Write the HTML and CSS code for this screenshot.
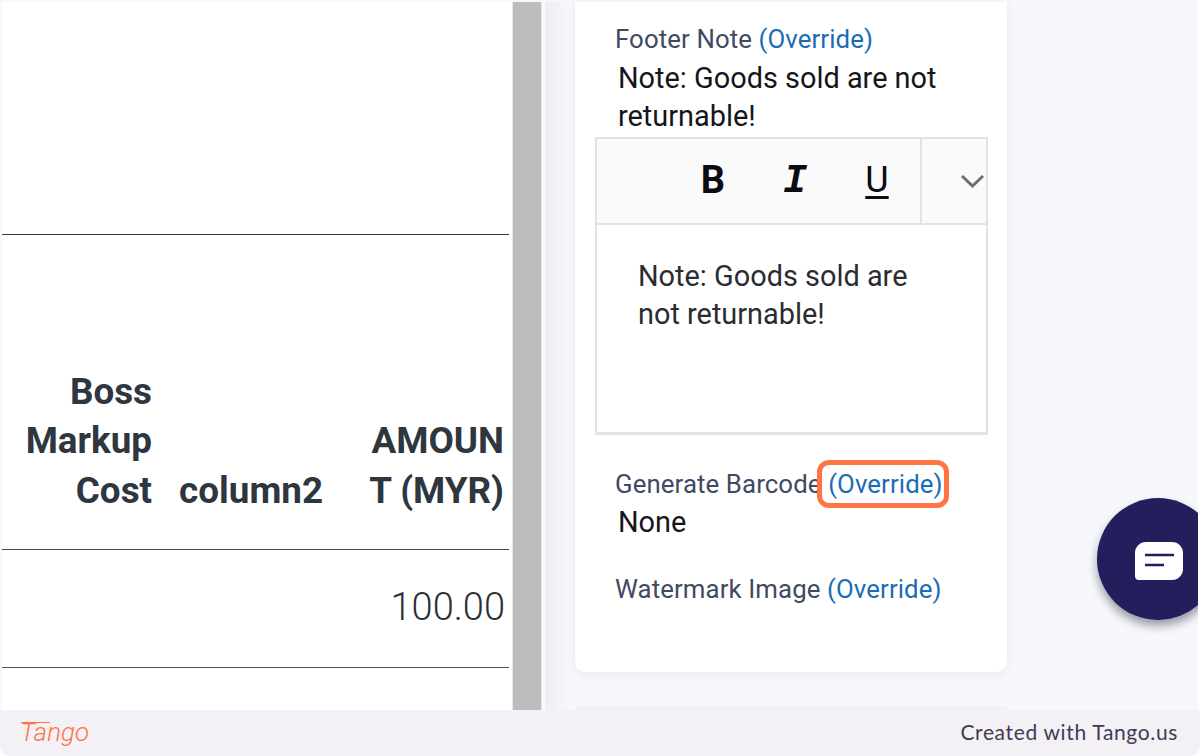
FILE: index.html
```html
<!DOCTYPE html>
<html lang="en">
<head>
    <meta charset="UTF-8">
    <meta name="viewport" content="width=device-width, initial-scale=1.0">
    <title>Footer Note Override</title>
    <link rel="stylesheet" href="styles.css">
</head>
<body>
    <div class="frame">
        <div class="page">
            <div class="preview">
                <div class="table-head">
                    <div class="th th-boss">Boss Markup Cost</div>
                    <div class="th th-col2">column2</div>
                    <div class="th th-amount">AMOUN<br>T (MYR)</div>
                </div>
                <div class="table-row">100.00</div>
            </div>
            <div class="scrollbar"></div>
            <div class="side">
                <div class="card">
                    <div class="label">Footer Note <a class="override">(Override)</a></div>
                    <div class="value value-note">Note: Goods sold are not returnable!</div>
                    <div class="editor">
                        <div class="toolbar">
                            <div class="tools">
                                <span class="tool tool-b">B</span>
                                <span class="tool tool-i">I</span>
                                <span class="tool tool-u">U</span>
                            </div>
                            <div class="more">
                                <svg width="25" height="14" viewBox="0 0 25 14"><path d="M2 2l10.500 10L23 2" fill="none" stroke="#6b6f76" stroke-width="3"/></svg>
                            </div>
                        </div>
                        <div class="editor-body">Note: Goods sold are not returnable!</div>
                    </div>
                    <div class="label label-barcode">Generate Barcode <a class="override override-marked">(Override)</a></div>
                    <div class="value">None</div>
                    <div class="label label-watermark">Watermark Image <a class="override">(Override)</a></div>
                </div>
                <div class="card-next"></div>
            </div>
        </div>
        <div class="chat-btn">
            <svg width="48" height="38" viewBox="0 0 48 38">
                <path d="M11 0h26a11 11 0 0 1 11 11v16a11 11 0 0 1-11 11H4a4 4 0 0 1-4-4V11A11 11 0 0 1 11 0z" fill="#fff"/>
                <path d="M10 13h29M10 23h19" stroke="#221f5c" stroke-width="2.500" fill="none"/>
            </svg>
        </div>
    </div>
    <div class="footer">
        <span class="logo">Tango</span>
        <span class="credit">Created with Tango.us</span>
    </div>
</body>
</html>
```

FILE: styles.css
```css
* {
    box-sizing: border-box;
}
html, body {
    height: 100%;
}
body {
    margin: 0;
    background: #fff;
    font-family: 'Roboto', sans-serif;
    overflow: hidden;
}
.frame {
    position: relative;
    height: 710px;
    margin-right: 2px;
    padding: 2px 0 0 2px;
    background: #f7f8fc;
    overflow: hidden;
}
.page {
    height: 100%;
    display: flex;
}
.preview {
    width: 510px;
    padding: 232px 3px 0 0;
    background: #fff;
}
.table-head {
    display: flex;
    align-items: flex-end;
    justify-content: flex-end;
    height: 316px;
    padding-bottom: 34px;
    border-top: 1px solid #3c3c3c;
    border-bottom: 1px solid #4a4a4a;
    font-size: 36.8px;
    font-weight: 700;
    line-height: 49.5px;
    color: #2e3640;
    text-align: right;
}
.th-boss {
    width: 130px;
    margin-right: 25px;
}
.th-col2 {
    width: 146px;
    margin-right: 43px;
}
.th-amount {
    width: 138px;
    margin-right: 5px;
    white-space: nowrap;
}
.table-row {
    height: 118px;
    padding: 35px 4px 0 0;
    border-bottom: 1px solid #555;
    text-align: right;
    font-size: 38px;
    font-weight: 300;
    line-height: 44px;
    color: #2b2f36;
}
.scrollbar {
    width: 30px;
    background: #bdbdbd;
    border-left: 1px solid #e6e6e6;
    border-right: 1px solid #e6e6e6;
}
.side {
    width: 465px;
    padding-left: 33px;
    background: linear-gradient(90deg, #fafafc 0, #fafafc 3px, #eceef4 4px, #f7f8fc 28px);
}
.card {
    height: 670px;
    padding: 18px 20px 0;
    background: #fff;
    border-radius: 0 0 10px 10px;
    box-shadow: 0 2px 8px rgba(60, 70, 110, 0.08);
}
.label {
    padding-left: 20px;
    font-size: 25.8px;
    line-height: 38px;
    letter-spacing: 0.1px;
    color: #3f4a63;
}
.override {
    position: relative;
    color: #1a6db4;
}
.override-marked::after {
    content: "";
    position: absolute;
    left: -11px;
    right: -6px;
    top: -9px;
    bottom: -9px;
    border: 5px solid #ff7442;
    border-radius: 12px;
}
.value {
    padding-left: 23px;
    font-size: 28.9px;
    line-height: 38px;
    color: #14161c;
}
.value-note {
    width: 350px;
    padding-top: 1px;
}
.editor {
    width: 393px;
    margin-top: 2px;
    border: 2px solid #e2e2e2;
    border-bottom-width: 3px;
}
.toolbar {
    display: flex;
    height: 86px;
    background: #fafafa;
    border-bottom: 2px solid #e2e2e2;
}
.tools {
    flex: 1;
    display: flex;
    align-items: center;
    justify-content: flex-end;
    gap: 42px;
    padding: 0 23px 2px 0;
    border-right: 2px solid #e2e2e2;
    font-size: 38px;
    color: #0c0c10;
}
.tool {
    width: 40px;
    text-align: center;
}
.tool-b {
    font-weight: 700;
}
.tool-i {
    padding-top: 3px;
    font-family: 'Liberation Mono', monospace;
    font-style: italic;
    font-weight: 700;
    font-size: 40px;
}
.tool-u {
    font-size: 36px;
    text-decoration: underline;
    text-underline-offset: 4px;
}
.more {
    width: 64px;
    display: flex;
    align-items: center;
    justify-content: flex-end;
    padding-right: 1px;
}
.editor-body {
    height: 207px;
    padding: 32px 60px 0 41px;
    background: #fff;
    font-size: 28.9px;
    line-height: 38px;
    color: #2a2c32;
}
.label-barcode {
    margin-top: 30px;
}
.label-watermark {
    margin-top: 29px;
}
.card-next {
    height: 20px;
    margin-top: 34px;
    background: #f0f2fa;
}
.chat-btn {
    position: absolute;
    left: 1097px;
    top: 498px;
    width: 122px;
    height: 122px;
    display: flex;
    align-items: center;
    padding: 4px 0 0 38px;
    border-radius: 50%;
    background: #221f5c;
    box-shadow: 0 6px 10px rgba(40, 40, 60, 0.45);
}
.footer {
    height: 46px;
    display: flex;
    align-items: center;
    justify-content: space-between;
    padding: 0 22px 0 20px;
    background: #f3f1f6;
    border-radius: 0 0 10px 10px;
}
.logo {
    position: relative;
    padding-bottom: 2px;
    font-style: italic;
    font-weight: 300;
    font-size: 26px;
    color: #ff7442;
}
.logo::before {
    content: "";
    position: absolute;
    left: 1px;
    top: 5px;
    width: 29px;
    height: 1px;
    background: #ff7442;
}
.credit {
    font-family: 'Lato', sans-serif;
    font-size: 21px;
    letter-spacing: 0.65px;
    color: #423a54;
    padding-bottom: 4px;
}
```
